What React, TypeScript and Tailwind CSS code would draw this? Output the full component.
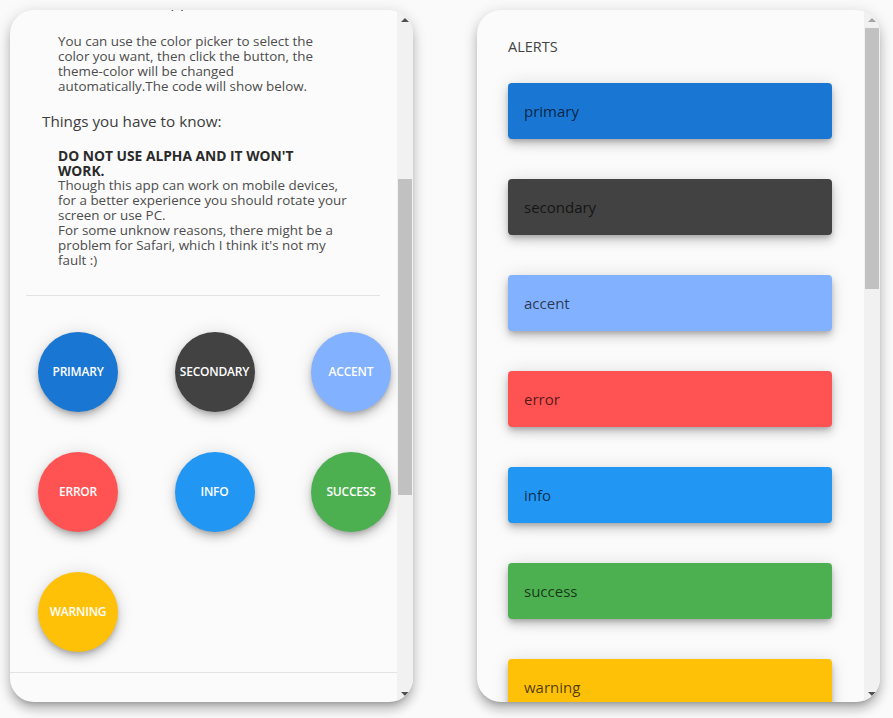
import React from "react";

const font = { fontFamily: '"Open Sans", "Noto Sans", sans-serif' };

function ScrollBar({ thumbTop, thumbH, arrowColor }: { thumbTop: string; thumbH: string; arrowColor: "dark" | "light" }) {
  const up =
    arrowColor === "dark"
      ? "w-0 h-0 border-x-[4px] border-x-transparent border-b-[4px] border-b-[#505050]"
      : "w-0 h-0 border-x-[4px] border-x-transparent border-b-[4px] border-b-[#a3a3a3]";
  const down = "w-0 h-0 border-x-[4px] border-x-transparent border-t-[4px] border-t-[#505050]";
  return (
    <div className="w-[16px] shrink-0 flex flex-col bg-[#f1f1f1]">
      <div className="h-[17px] flex items-center justify-center pt-[2px]">
        <div className={up} />
      </div>
      <div className="flex-1 px-[1px]">
        <div className={`${thumbTop} ${thumbH} bg-[#c1c1c1] w-full`} />
      </div>
      <div className="h-[17px] flex items-center justify-center">
        <div className={down} />
      </div>
    </div>
  );
}

const circles = [
  { label: "PRIMARY", bg: "bg-[#1976d2]" },
  { label: "SECONDARY", bg: "bg-[#424242]" },
  { label: "ACCENT", bg: "bg-[#82b1ff]" },
  { label: "ERROR", bg: "bg-[#ff5252]" },
  { label: "INFO", bg: "bg-[#2196f3]" },
  { label: "SUCCESS", bg: "bg-[#4caf50]" },
  { label: "WARNING", bg: "bg-[#ffc107]" },
];

const alerts = [
  { label: "primary", bg: "bg-[#1976d2]" },
  { label: "secondary", bg: "bg-[#424242]" },
  { label: "accent", bg: "bg-[#82b1ff]" },
  { label: "error", bg: "bg-[#ff5252]" },
  { label: "info", bg: "bg-[#2196f3]" },
  { label: "success", bg: "bg-[#4caf50]" },
  { label: "warning", bg: "bg-[#ffc107]" },
];

const elev =
  "shadow-[0_3px_5px_-1px_rgba(0,0,0,0.2),0_6px_10px_0_rgba(0,0,0,0.14),0_1px_18px_0_rgba(0,0,0,0.12)]";

export default function App() {
  return (
    <div className="w-[893px] h-[718px] bg-[#fafafa] overflow-hidden flex gap-[64px] pl-[10px] pt-[10px]" style={font}>
      {/* Left panel */}
      <div className="w-[403px] h-[692px] rounded-3xl bg-[#fbfbfb] overflow-hidden flex shadow-[0_5px_5px_-3px_rgba(0,0,0,0.2),0_8px_10px_1px_rgba(0,0,0,0.14),0_3px_14px_2px_rgba(0,0,0,0.12)]">
        <div className="w-[387px] h-full overflow-hidden">
          <div className="mt-[-19px] pl-[32px] text-[16px] leading-[20px] text-[#444]">How to use this app</div>
          <div className="mt-[22.5px] pl-[48px] text-[13.4px] leading-[15px] text-[#4d4d4d] whitespace-nowrap">
            You can use the color picker to select the
            <br />
            color you want, then click the button, the
            <br />
            theme-color will be changed
            <br />
            automatically.The code will show below.
          </div>
          <div className="mt-[17.5px] pl-[32px] text-[15.25px] leading-[20px] text-[#3d3d3d]">Things you have to know:</div>
          <div className="mt-[16.5px] pl-[48px] text-[13.4px] leading-[15px] text-[#4d4d4d] whitespace-nowrap">
            <div className="font-bold text-[13.8px] text-[#2a2a2a]">
              DO NOT USE ALPHA AND IT WON'T
              <br />
              WORK.
            </div>
            Though this app can work on mobile devices,
            <br />
            for a better experience you should rotate your
            <br />
            screen or use PC.
            <br />
            For some unknow reasons, there might be a
            <br />
            problem for Safari, which I think it's not my
            <br />
            fault :)
          </div>
          <div className="mt-[27.5px] ml-[16px] mr-[17px] h-px bg-[#e3e3e3]" />
          <div className="mt-[36px] pl-[28px] grid grid-cols-[80px_80px_80px] gap-x-[56.5px] gap-y-[40px]">
            {circles.map((c) => (
              <div
                key={c.label}
                className={`w-[80px] h-[80px] rounded-full ${c.bg} ${elev} flex items-center justify-center text-white text-[12px] font-semibold tracking-[-0.2px]`}
              >
                {c.label}
              </div>
            ))}
          </div>
          <div className="mt-[20px] h-px bg-[#e3e3e3]" />
          <div className="h-[100px]" />
        </div>
        <ScrollBar thumbTop="mt-[152px]" thumbH="h-[316px]" arrowColor="dark" />
      </div>

      {/* Right panel */}
      <div className="w-[403px] h-[692px] rounded-3xl bg-[#fbfbfb] overflow-hidden flex shadow-[0_5px_5px_-3px_rgba(0,0,0,0.2),0_8px_10px_1px_rgba(0,0,0,0.14),0_3px_14px_2px_rgba(0,0,0,0.12)]">
        <div className="w-[387px] h-full overflow-hidden">
          <div className="pt-[27px] pl-[31px] text-[14.5px] leading-[20px] text-[#444]">ALERTS</div>
          <div className="mt-[26px] pl-[31px] flex flex-col gap-[40px]">
            {alerts.map((a) => (
              <div
                key={a.label}
                className={`w-[324px] h-[56px] shrink-0 rounded-[4px] ${a.bg} ${elev} flex items-center pl-[16px] text-[15px] text-black/70`}
              >
                {a.label}
              </div>
            ))}
          </div>
        </div>
        <ScrollBar thumbTop="mt-[1px]" thumbH="h-[261px]" arrowColor="light" />
      </div>
    </div>
  );
}
